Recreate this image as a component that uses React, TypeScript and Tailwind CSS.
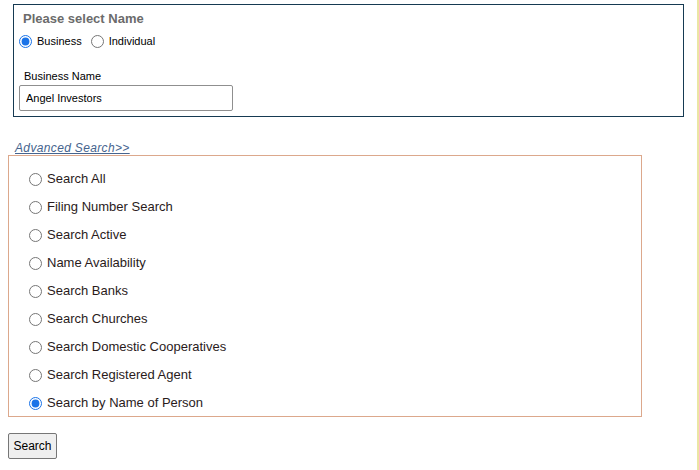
import React from 'react';

const options = [
  'Search All',
  'Filing Number Search',
  'Search Active',
  'Name Availability',
  'Search Banks',
  'Search Churches',
  'Search Domestic Cooperatives',
  'Search Registered Agent',
  'Search by Name of Person',
];

const App: React.FC = () => {
  return (
    <div className="w-[699px] h-[470px] flex bg-white font-['Liberation_Sans',Arial,sans-serif]">
      <div className="w-[697px] flex flex-col">
        {/* name type box */}
        <div className="ml-[13px] mt-[4px] w-[671px] h-[113px] border border-[#163a52] pt-[6px]">
          <div className="pl-[9px] text-[13px] leading-4 font-bold text-[#6b6b6b]">Please select Name</div>
          <div className="mt-[6px] pl-[5px] flex items-center h-4 text-[11px] text-black">
            <input type="radio" name="nameType" defaultChecked className="m-0 w-[13px] h-[13px] accent-[#1a73e8]" />
            <span className="ml-[5px]">Business</span>
            <input type="radio" name="nameType" className="m-0 ml-[9px] w-[13px] h-[13px]" />
            <span className="ml-[5px]">Individual</span>
          </div>
          <div className="mt-[20px] pl-[10px] text-[11px] leading-[14px] text-black">Business Name</div>
          <input
            type="text"
            defaultValue="Angel Investors"
            className="ml-[5px] mt-[2px] w-[214px] h-[26px] border border-[#8f8f8f] rounded-[2px] px-[6px] text-[11px] text-black outline-none"
          />
        </div>

        <a href="#" className="ml-[15px] mt-[24px] text-[12px] leading-[14px] italic underline tracking-[0.35px] text-[#46648e] w-fit">
          Advanced Search&gt;&gt;
        </a>

        {/* search type box */}
        <div className="ml-[8px] w-[634px] h-[262px] border border-[#dca88c] pt-[9px] pl-[20px]">
          {options.map((opt, i) => (
            <label key={opt} className="flex items-center h-[28px] text-[13px] text-[#2a1b1b]">
              <input
                type="radio"
                name="searchType"
                defaultChecked={i === options.length - 1}
                className="m-0 w-[13px] h-[13px] accent-[#1a73e8]"
              />
              <span className="ml-[5px]">{opt}</span>
            </label>
          ))}
        </div>

        <button className="ml-[8px] mt-[16px] w-[49px] h-[26px] bg-[#efefef] border border-[#767676] rounded-[2px] text-[12px] text-black">
          Search
        </button>
      </div>
      <div className="w-[2px] h-full bg-[#ebe5a4]" />
    </div>
  );
};

export default App;
